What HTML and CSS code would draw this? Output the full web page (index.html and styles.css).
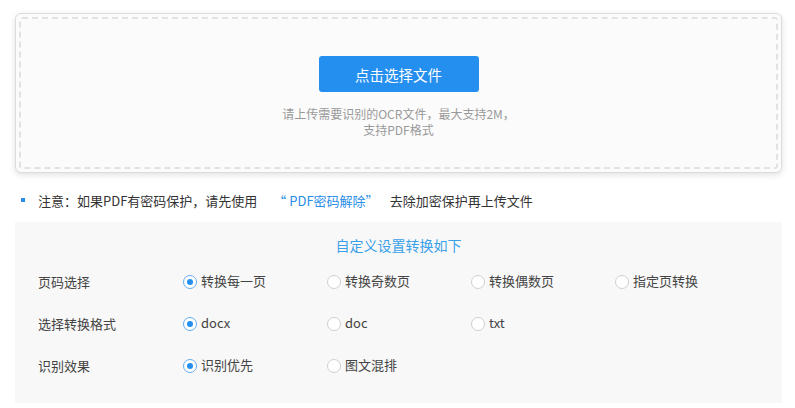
FILE: index.html
```html
<!DOCTYPE html>
<html lang="zh-CN">
<head>
<meta charset="utf-8">
<link rel="stylesheet" href="styles.css">
</head>
<body>
<div class="page">
  <div class="upload-card">
    <div class="upload-inner">
      <button class="pick-btn">点击选择文件</button>
      <p class="hint">请上传需要识别的OCR文件，最大支持2M，<br>支持PDF格式</p>
    </div>
  </div>
  <div class="note">
    <span class="bullet"></span>
    <span>注意：如果PDF有密码保护，请先使用</span>
    <a class="link">“ PDF密码解除”</a>
    <span>去除加密保护再上传文件</span>
  </div>
  <div class="settings">
    <div class="settings-title">自定义设置转换如下</div>
    <div class="row">
      <div class="label">页码选择</div>
      <label class="opt"><span class="radio on"></span>转换每一页</label>
      <label class="opt"><span class="radio"></span>转换奇数页</label>
      <label class="opt"><span class="radio"></span>转换偶数页</label>
      <label class="opt"><span class="radio"></span>指定页转换</label>
    </div>
    <div class="row">
      <div class="label">选择转换格式</div>
      <label class="opt"><span class="radio on"></span>docx</label>
      <label class="opt"><span class="radio"></span>doc</label>
      <label class="opt"><span class="radio"></span>txt</label>
    </div>
    <div class="row">
      <div class="label">识别效果</div>
      <label class="opt"><span class="radio on"></span>识别优先</label>
      <label class="opt"><span class="radio"></span>图文混排</label>
    </div>
  </div>
</div>
</body>
</html>
```
FILE: styles.css
```css
* { box-sizing: border-box; }
html, body { margin: 0; padding: 0; background: #fff; }
body {
  font-family: "Noto Sans CJK SC", "Microsoft YaHei", sans-serif;
  color: #333;
}
.page { padding: 13px 13px 0 15px; }
.upload-card {
  width: 767px;
  height: 160px;
  border: 1px solid #dcdcdc;
  border-radius: 6px;
  background: #fbfbfb;
  box-shadow: 0 2px 6px rgba(0,0,0,0.12);
  padding: 3px;
}
.upload-inner {
  height: 100%;
  border: 2px dashed #e2e2e2;
  border-radius: 3px;
  display: flex;
  flex-direction: column;
  align-items: center;
  padding-top: 37px;
}
.pick-btn {
  width: 160px;
  height: 36px;
  border: none;
  border-radius: 3px;
  background: #258ff0;
  color: #fff;
  font-family: inherit;
  font-size: 14.5px;
  padding: 0;
}
.hint {
  margin: 14px 0 0;
  font-size: 12px;
  line-height: 16px;
  color: #999;
  text-align: center;
}
.note {
  display: flex;
  align-items: center;
  height: 24px;
  margin-top: 15px;
  font-size: 13px;
  color: #333;
}
.bullet {
  width: 4px;
  height: 4px;
  background: #2a8fe8;
  margin: 0 13px 0 6px;
}
.link {
  color: #2a8ee8;
  margin: 0 11px 0 16px;
}
.settings {
  width: 767px;
  height: 181px;
  margin-top: 10px;
  background: #f8f8f8;
  padding: 12px 0 0 23px;
}
.settings-title {
  text-align: center;
  font-size: 14px;
  color: #3aa0e8;
  line-height: 22px;
  margin-left: -23px;
}
.row {
  display: grid;
  grid-template-columns: 145px repeat(4, 144px);
  align-items: center;
  height: 42px;
  font-size: 13px;
  color: #444;
}
.settings-title + .row { margin-top: 4px; }
.opt {
  display: flex;
  align-items: center;
  line-height: 16px;
}
.radio {
  width: 14px;
  height: 14px;
  border-radius: 50%;
  border: 1px solid #cfcfcf;
  background: #fff;
  margin-right: 4px;
  display: flex;
  align-items: center;
  justify-content: center;
  position: relative;
  top: 1px;
}
.radio.on { border-color: #63acef; }
.radio.on::after {
  content: "";
  width: 6px;
  height: 6px;
  border-radius: 50%;
  background: #258ff0;
}
```
